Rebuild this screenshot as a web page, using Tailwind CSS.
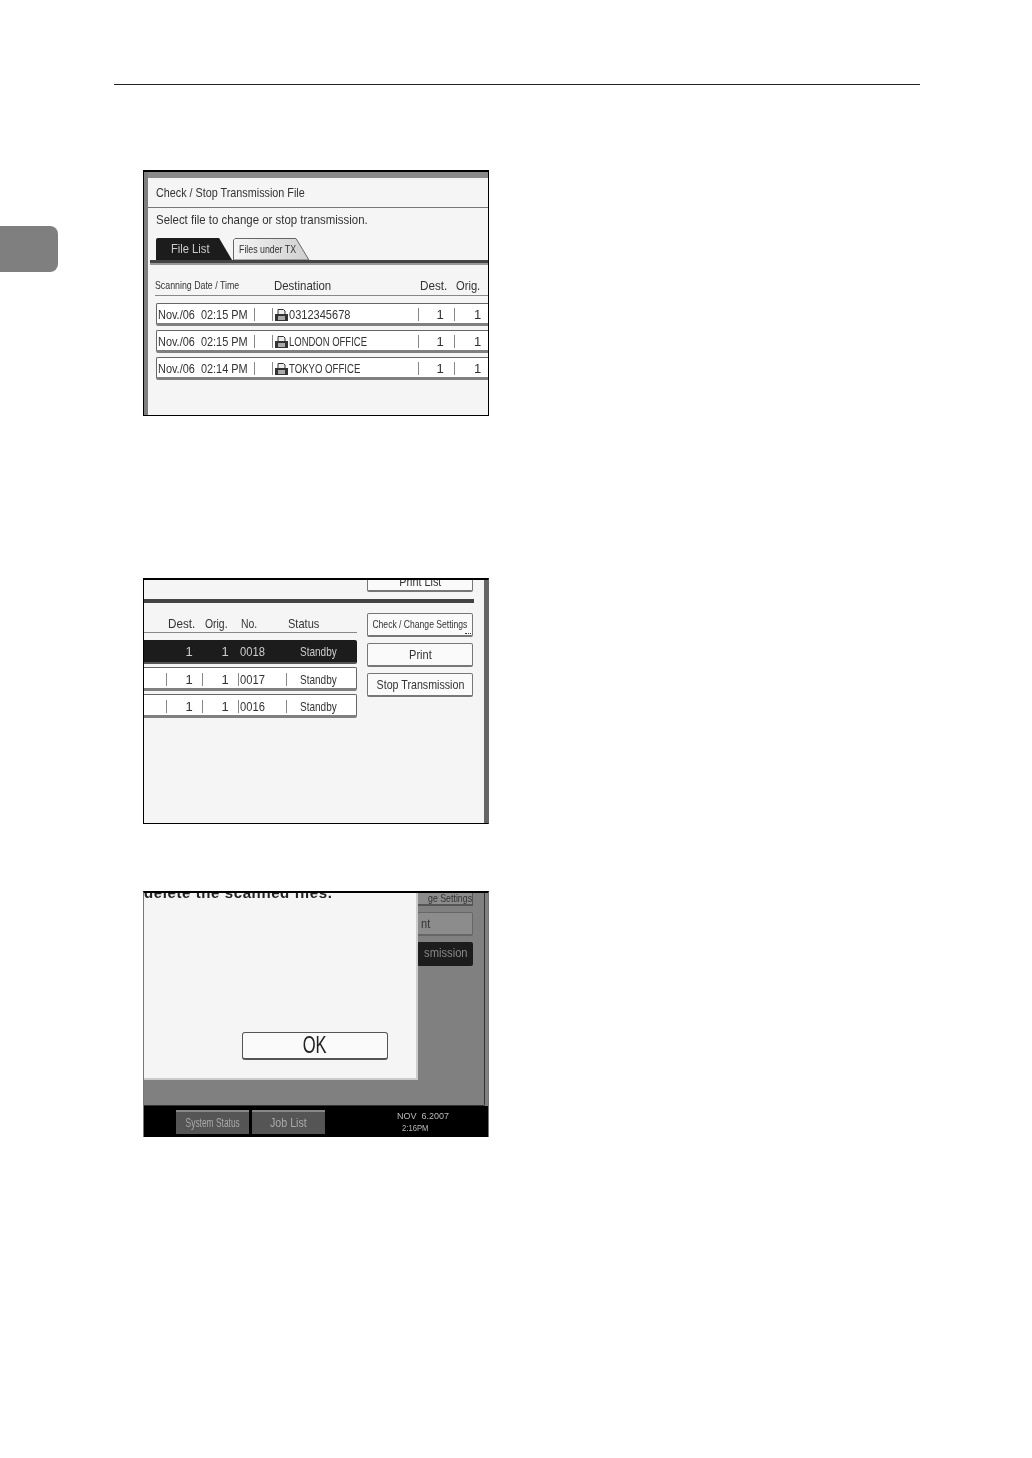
<!DOCTYPE html>
<html lang="en">
<head>
  <meta charset="UTF-8">
  <title>Check / Stop Transmission File</title>
  <script src="https://cdn.jsdelivr.net/npm/@tailwindcss/browser@4"></script>
</head>
<body class="bg-white font-['Liberation_Sans',sans-serif] text-[#333]">
  <div class="relative w-[1032px] h-[1458px] overflow-hidden pt-[84px]">
    <div class="ml-[114px] w-[806px] h-px bg-[#222]"></div>

    <!-- side tab -->
    <div class="absolute left-0 top-[226px] w-[58px] h-[46px] bg-[#7f7f7f] rounded-r-lg"></div>

    <!-- Screen 1: file list -->
    <div class="ml-[143px] mt-[85px] w-[346px] h-[246px] border border-t-2 border-black bg-[#f5f5f5] overflow-hidden flex blur-[0.3px]">
      <div class="w-[4px] shrink-0 bg-[#7f7f7f]"></div>
      <div class="flex-1 min-w-0">
        <div class="h-[6px] bg-[#8a8a8a]"></div>
        <div class="h-[30px] pl-[8px] flex items-center border-b border-[#777] text-[13px] leading-none whitespace-nowrap"><span class="inline-block origin-left scale-x-[.83]">Check / Stop Transmission File</span></div>
        <div class="h-[23px] pl-[8px] flex items-center text-[13px] leading-none whitespace-nowrap"><span class="inline-block origin-left scale-x-[.88]">Select file to change or stop transmission.</span></div>
        <div class="flex pl-[8px] h-[22px] mt-[7px] gap-px whitespace-nowrap">
          <div class="w-[76px] h-full bg-[#1c1c1c] text-[#ccc] text-[13px] pl-[15px] flex items-center rounded-tl-[2px] [clip-path:polygon(0_0,83%_0,100%_100%,0_100%)]"><span class="inline-block origin-left scale-x-[.86]">File List</span></div>
          <div class="relative w-[77px] h-full text-[11px] pl-[6px] flex items-center">
            <svg class="absolute inset-0" width="77" height="22" viewBox="0 0 77 22">
              <defs><linearGradient id="tab" x1="0" x2="1" y1="0" y2="0"><stop offset="0" stop-color="#f5f5f5"/><stop offset="1" stop-color="#cfcfcf"/></linearGradient></defs>
              <path d="M0.5 22V2L2 0.5H63L76 22Z" fill="url(#tab)" stroke="#666"/>
            </svg>
            <span class="relative inline-block origin-left scale-x-[.8]">Files under TX</span>
          </div>
        </div>
        <div class="h-[5px] ml-[2px] bg-[#444] border-b-2 border-[#999]"></div>
        <div class="h-[31px] pt-[11px] ml-[7px] flex items-center border-b border-[#888] text-[13px] leading-none whitespace-nowrap">
          <span class="w-[119px] text-[11px]"><span class="inline-block origin-left scale-x-[.8]">Scanning Date / Time</span></span>
          <span class="w-[146px]"><span class="inline-block origin-left scale-x-[.88]">Destination</span></span>
          <span class="w-[36px]"><span class="inline-block origin-left scale-x-[.9]">Dest.</span></span>
          <span><span class="inline-block origin-left scale-x-[.86]">Orig.</span></span>
        </div>
        <div class="ml-[8px] mt-[7px] flex flex-col gap-[4px] text-[13px] leading-none whitespace-nowrap">
          <div class="h-[23px] pt-[2px] flex items-center bg-white border border-b-[3px] border-[#666] border-b-[#808080] border-r-0 rounded-l-[2px]">
            <span class="w-[97px] pl-[1px]"><span class="inline-block origin-left scale-x-[.84]">Nov./06&nbsp; 02:15 PM</span></span><i class="w-px h-[13px] bg-[#888]"></i>
            <span class="w-[17px]"></span><i class="w-px h-[13px] bg-[#888]"></i>
            <svg class="ml-[2px] mr-px" width="13" height="12" viewBox="0 0 13 12"><path d="M3 5.5V.5h5.5L10 2v3.5" fill="#eee" stroke="#333"/><rect x="0" y="5" width="13" height="7" fill="#333"/><rect x="3" y="7" width="7" height="4" fill="#aaa"/></svg>
            <span class="w-[129px]"><span class="inline-block origin-left scale-x-[.85]">0312345678</span></span><i class="w-px h-[13px] bg-[#888]"></i>
            <span class="w-[35px] pl-[7px] text-center">1</span><i class="w-px h-[13px] bg-[#888]"></i>
            <span class="w-[33px] pl-[19px]">1</span>
          </div>
          <div class="h-[23px] pt-[2px] flex items-center bg-white border border-b-[3px] border-[#666] border-b-[#808080] border-r-0 rounded-l-[2px]">
            <span class="w-[97px] pl-[1px]"><span class="inline-block origin-left scale-x-[.84]">Nov./06&nbsp; 02:15 PM</span></span><i class="w-px h-[13px] bg-[#888]"></i>
            <span class="w-[17px]"></span><i class="w-px h-[13px] bg-[#888]"></i>
            <svg class="ml-[2px] mr-px" width="13" height="12" viewBox="0 0 13 12"><path d="M3 5.5V.5h5.5L10 2v3.5" fill="#eee" stroke="#333"/><rect x="0" y="5" width="13" height="7" fill="#333"/><rect x="3" y="7" width="7" height="4" fill="#aaa"/></svg>
            <span class="w-[129px] text-[12px]"><span class="inline-block origin-left scale-x-[.79]">LONDON OFFICE</span></span><i class="w-px h-[13px] bg-[#888]"></i>
            <span class="w-[35px] pl-[7px] text-center">1</span><i class="w-px h-[13px] bg-[#888]"></i>
            <span class="w-[33px] pl-[19px]">1</span>
          </div>
          <div class="h-[23px] pt-[2px] flex items-center bg-white border border-b-[3px] border-[#666] border-b-[#808080] border-r-0 rounded-l-[2px]">
            <span class="w-[97px] pl-[1px]"><span class="inline-block origin-left scale-x-[.84]">Nov./06&nbsp; 02:14 PM</span></span><i class="w-px h-[13px] bg-[#888]"></i>
            <span class="w-[17px]"></span><i class="w-px h-[13px] bg-[#888]"></i>
            <svg class="ml-[2px] mr-px" width="13" height="12" viewBox="0 0 13 12"><path d="M3 5.5V.5h5.5L10 2v3.5" fill="#eee" stroke="#333"/><rect x="0" y="5" width="13" height="7" fill="#333"/><rect x="3" y="7" width="7" height="4" fill="#aaa"/></svg>
            <span class="w-[129px] text-[12px]"><span class="inline-block origin-left scale-x-[.8]">TOKYO OFFICE</span></span><i class="w-px h-[13px] bg-[#888]"></i>
            <span class="w-[35px] pl-[7px] text-center">1</span><i class="w-px h-[13px] bg-[#888]"></i>
            <span class="w-[33px] pl-[19px]">1</span>
          </div>
        </div>
      </div>
    </div>

    <!-- Screen 2: selected file -->
    <div class="ml-[143px] mt-[162px] w-[346px] h-[246px] border border-t-2 border-black border-r-[#666] bg-[#f5f5f5] overflow-hidden flex blur-[0.3px]">
      <div class="flex-1 min-w-0">
        <div class="ml-[223px] w-[106px] h-[12px] bg-[#fafafa] border border-t-0 border-b-2 border-[#777] rounded-b-[2px] text-[13px] leading-[4px] text-center overflow-hidden"><span class="inline-block scale-x-[.83]">Print List</span></div>
        <div class="mt-[7px] h-[4px] w-[330px] bg-[#444]"></div>
        <div class="flex">
          <div class="w-[213px]">
            <div class="h-[29px] mt-px pt-[10px] flex items-center border-b border-[#888] text-[13px] leading-none whitespace-nowrap">
              <span class="ml-[24px] w-[37px]"><span class="inline-block origin-left scale-x-[.9]">Dest.</span></span>
              <span class="w-[36px]"><span class="inline-block origin-left scale-x-[.8]">Orig.</span></span>
              <span class="w-[47px]"><span class="inline-block origin-left scale-x-[.8]">No.</span></span>
              <span><span class="inline-block origin-left scale-x-[.85]">Status</span></span>
            </div>
            <div class="mt-[7px] flex flex-col gap-[3px] text-[13px] leading-none whitespace-nowrap">
              <div class="h-[24px] pt-[1px] flex items-center bg-[#1c1c1c] text-[#ccc] border-b-2 border-[#555] rounded-r-[2px]">
                <span class="w-[59px] text-center pl-[31px]">1</span>
                <span class="w-[36px] text-center pl-[8px]">1</span>
                <span class="w-[37px] pl-[1px]"><span class="inline-block origin-left scale-x-[.86]">0018</span></span>
                <span class="pl-[24px]"><span class="inline-block origin-left scale-x-[.77]">Standby</span></span>
              </div>
              <div class="h-[24px] pt-[2px] flex items-center bg-white border border-l-0 border-b-[3px] border-[#666] border-b-[#808080] rounded-r-[2px]">
                <span class="w-[22px]"></span><i class="w-px h-[13px] bg-[#888]"></i>
                <span class="w-[35px] text-center pl-[9px]">1</span><i class="w-px h-[13px] bg-[#888]"></i>
                <span class="w-[35px] text-center pl-[9px]">1</span><i class="w-px h-[13px] bg-[#888]"></i>
                <span class="w-[47px] pl-[1px]"><span class="inline-block origin-left scale-x-[.86]">0017</span></span><i class="w-px h-[13px] bg-[#888]"></i>
                <span class="pl-[13px]"><span class="inline-block origin-left scale-x-[.77]">Standby</span></span>
              </div>
              <div class="h-[24px] pt-[2px] flex items-center bg-white border border-l-0 border-b-[3px] border-[#666] border-b-[#808080] rounded-r-[2px]">
                <span class="w-[22px]"></span><i class="w-px h-[13px] bg-[#888]"></i>
                <span class="w-[35px] text-center pl-[9px]">1</span><i class="w-px h-[13px] bg-[#888]"></i>
                <span class="w-[35px] text-center pl-[9px]">1</span><i class="w-px h-[13px] bg-[#888]"></i>
                <span class="w-[47px] pl-[1px]"><span class="inline-block origin-left scale-x-[.86]">0016</span></span><i class="w-px h-[13px] bg-[#888]"></i>
                <span class="pl-[13px]"><span class="inline-block origin-left scale-x-[.77]">Standby</span></span>
              </div>
            </div>
          </div>
          <div class="ml-[10px] mt-[10px] w-[106px] flex flex-col gap-[6px] text-[13px] leading-none whitespace-nowrap text-center">
            <div class="relative h-[24px] flex items-center justify-center bg-[#fafafa] border border-b-2 border-[#777] rounded-[2px] text-[11px]">
              <span class="inline-block scale-x-[.78]">Check / Change Settings</span>
              <span class="absolute right-px bottom-[1px] w-[6px] h-px border-b border-dotted border-[#333]"></span>
            </div>
            <div class="h-[24px] flex items-center justify-center bg-[#fafafa] border border-b-2 border-[#777] rounded-[2px]"><span class="inline-block scale-x-[.85]">Print</span></div>
            <div class="h-[24px] flex items-center justify-center bg-[#fafafa] border border-b-2 border-[#777] rounded-[2px]"><span class="inline-block scale-x-[.82]">Stop Transmission</span></div>
          </div>
        </div>
      </div>
      <div class="w-[4px] shrink-0 bg-[#666]"></div>
    </div>

    <!-- Screen 3: confirmation -->
    <div class="relative ml-[143px] mt-[67px] w-[346px] h-[246px] border-x border-t-2 border-black border-x-[#777] bg-[#808080] overflow-hidden flex flex-col blur-[0.3px]">
      <div class="relative flex-1 border-r border-b border-[#333] mr-[3px] rounded-br-[2px]">
        <div class="absolute left-[273px] top-0 w-[56px] flex flex-col gap-[6px] text-[11px] leading-none text-right whitespace-nowrap">
          <div class="h-[13px] bg-[#8c8c8c] border-b-2 border-r border-[#555] overflow-hidden pr-[6px]"><span class="inline-block origin-right scale-x-[.8]">ge Settings</span></div>
          <div class="h-[24px] bg-[#8c8c8c] border border-b-2 border-[#666] rounded-[2px] text-[13px] text-left pl-[3px] leading-[22px]"><span class="inline-block origin-left scale-x-[.85]">nt</span></div>
          <div class="h-[24px] bg-[#1c1c1c] text-[#888] rounded-[2px] text-[13px] pr-[10px] leading-[22px]"><span class="inline-block origin-right scale-x-[.86]">smission</span></div>
        </div>
        <div class="absolute left-0 top-0 w-[274px] h-[187px] bg-[#f5f5f5] border-r-2 border-b-2 border-[#ccc]">
          <div class="h-[6px] overflow-hidden text-[15px] tracking-[0.6px] leading-[0px] font-bold whitespace-nowrap text-[#222]">delete the scanned files.</div>
          <div class="ml-[98px] mt-[133px] w-[146px] h-[28px] flex items-center justify-center bg-[#fafafa] border border-b-2 border-[#555] rounded-[3px] text-[23px] leading-none text-[#222]"><span class="inline-block scale-x-[.72]">OK</span></div>
        </div>
      </div>
      <div class="h-[31px] bg-black flex items-center pl-[32px] text-[13px] leading-none whitespace-nowrap text-[#aaa]">
        <div class="w-[73px] h-[24px] flex items-center justify-center bg-[#555] border-t-2 border-[#888] text-[12px]"><span class="inline-block scale-x-[.7]">System Status</span></div>
        <div class="ml-[3px] w-[73px] h-[24px] flex items-center justify-center bg-[#555] border-t-2 border-[#888]"><span class="inline-block scale-x-[.82]">Job List</span></div>
        <div class="ml-[72px] text-[9px] leading-[12px] text-[#bbb]">
          <div>NOV &nbsp;6.2007</div>
          <div class="pl-[5px]"><span class="inline-block origin-left scale-x-[.85]">2:16PM</span></div>
        </div>
      </div>
    </div>
  </div>
</body>
</html>
